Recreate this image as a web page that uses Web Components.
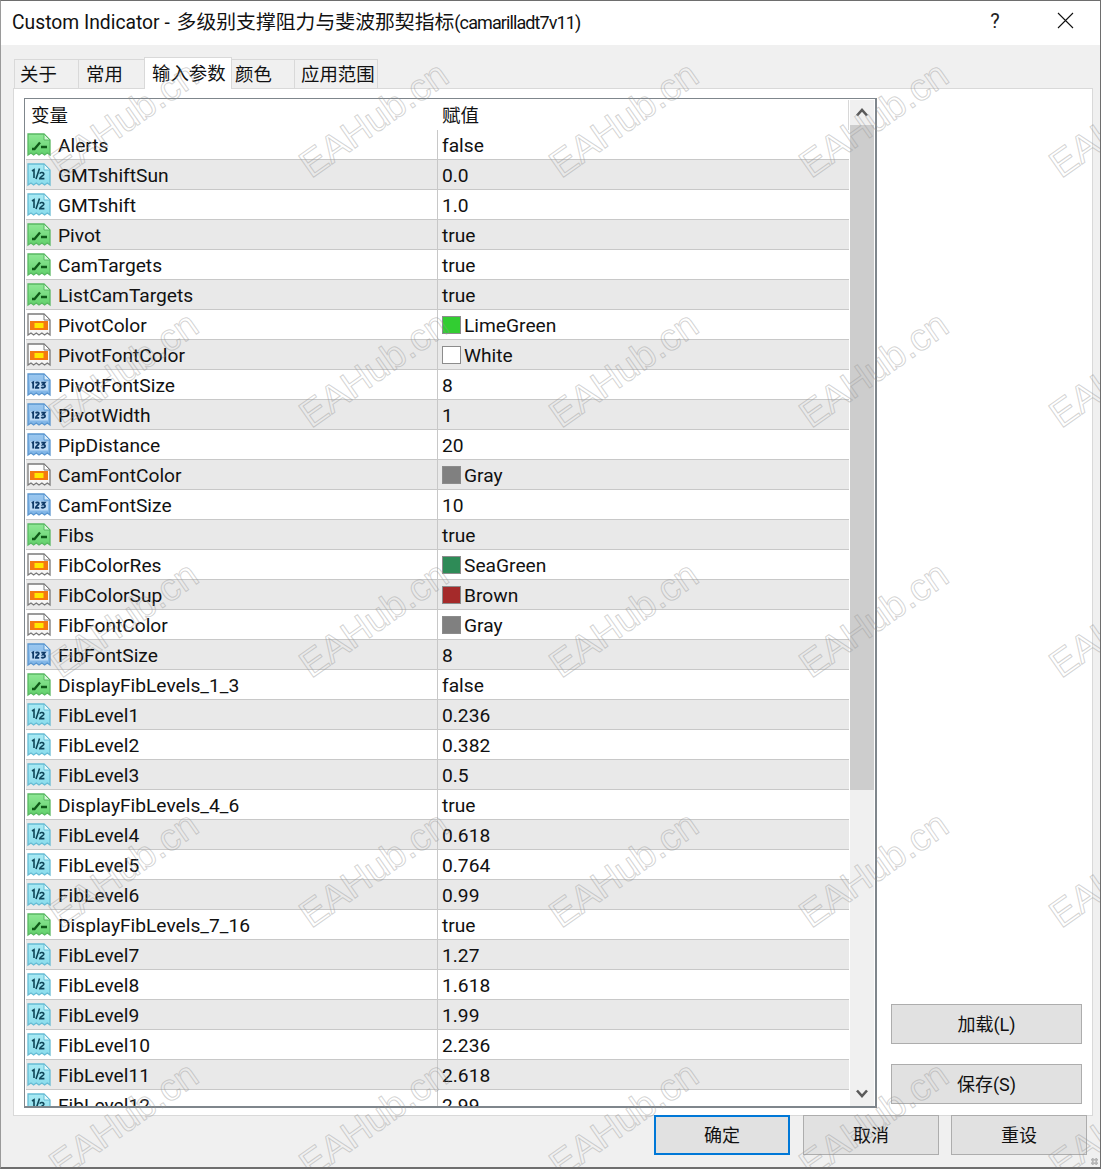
<!DOCTYPE html>
<html lang="zh"><head><meta charset="utf-8"><title>Custom Indicator</title>
<style>
html,body{margin:0;padding:0;background:#f0f0f0}
body{width:1101px;height:1169px;overflow:hidden;font-family:Roboto,"Noto Sans CJK SC",sans-serif}
</style></head><body>
<mt-dialog></mt-dialog>
<script>
const FONT='Roboto,"Noto Sans CJK SC",sans-serif';
const ICONS={
 b:{top:'#8fe896',bot:'#62d06c',edge:'#58b862',fold:'#d8f6da',inner:`<path d="M5 16H7.500L13 9.500M14 14H20" fill="none" stroke="#0f5a18" stroke-width="2.300"/>`},
 d:{top:'#a8eaf4',bot:'#8adcec',edge:'#66bcd4',fold:'#e6fafd',inner:`<path d="M5 8l2-1.300V15M12.500 5.500L9 16" fill="none" stroke="#0f4658" stroke-width="1.600"/><path d="M12.800 10.600c.6-1.600 4.300-1.400 4 .8-.2 1.200-4 2.700-4 4.200h4.600" fill="none" stroke="#0f4658" stroke-width="1.600"/>`},
 c:{top:'#ffffff',bot:'#f4f4f4',edge:'#7a7a7a',fold:'#fff',inner:`<rect x="3" y="8" width="18" height="9" fill="#f47a10"/><rect x="7.500" y="10" width="9" height="5" fill="#ffe800"/>`},
 i:{top:'#9cc8f0',bot:'#7fb4e6',edge:'#5a96cf',fold:'#dceefc',inner:`<rect x="3" y="8.500" width="18" height="9" fill="#cfe4f8" opacity=".75"/><path d="M4.700 10l1.500-.8v6.300M8.800 10.300c.6-1.400 3.200-1.200 3 .4-.1 1.100-3 2.400-3 4.100h3.400M14.300 9.600h3.400l-1.800 2.100c1.500-.1 2.300.6 2.200 1.600-.1 1.500-2.700 1.900-3.800.8" fill="none" stroke="#0f3a68" stroke-width="1.800"/>`}
};
let gid=0;
class ParamIcon extends HTMLElement{
 connectedCallback(){
  const k=ICONS[this.getAttribute('type')]||ICONS.b,id='g'+(++gid);
  this.attachShadow({mode:'open'}).innerHTML=`<style>:host{display:block;width:24px;height:24px;flex:none}svg{display:block}</style>
  <svg width="24" height="24" viewBox="0 0 24 24"><defs><linearGradient id="${id}" x1="0" y1="0" x2="0" y2="1"><stop offset="0" stop-color="${k.top}"/><stop offset="1" stop-color="${k.bot}"/></linearGradient></defs><path d="M1 1H17L23 7V22l-2.700-2-2.700 2-2.700-2-2.900 2-2.700-2-2.700 2-2.600-2L1 22z" fill="url(#${id})" stroke="${k.edge}" stroke-width="1.300"/><path d="M17 1V7H23z" fill="${k.fold}" stroke="${k.edge}" stroke-width="1"/>${k.inner}</svg>`;
 }
}
customElements.define('param-icon',ParamIcon);
class ParamRow extends HTMLElement{
 connectedCallback(){
  const n=this.getAttribute('name'),v=this.getAttribute('value'),t=this.getAttribute('type'),c=this.getAttribute('swatch');
  this.attachShadow({mode:'open'}).innerHTML=`<style>
  :host{display:grid;grid-template-columns:411px 1fr;height:30px;flex:none;box-sizing:border-box;border-bottom:1px solid #c8c8c8;background:#fff;font:19.2px/29px ${FONT};color:#111;white-space:nowrap}
  :host(:nth-child(even)){background:#e9e9e9}
  .n{display:flex;align-items:center;gap:7px;padding-left:1px;height:29px}
  .v{display:flex;align-items:center;gap:3px;padding-left:4px;border-left:1px solid #c8c8c8;height:29px}
  span{margin-top:2px}
  i{display:block;width:17px;height:16px;border:1px solid #8c8c8c;flex:none}
  </style><div class="n"><param-icon type="${t}"></param-icon><span>${n}</span></div><div class="v">${c?`<i style="background:${c}"></i>`:''}<span>${v}</span></div>`;
 }
}
customElements.define('param-row',ParamRow);
class ScrollBar extends HTMLElement{
 connectedCallback(){
  this.attachShadow({mode:'open'}).innerHTML=`<style>
  :host{display:flex;flex-direction:column;width:24px;flex:none;background:#f0f0f0}
  .a{height:25px;flex:none;display:flex;align-items:center;justify-content:center}
  .t{height:665px;flex:none;background:#cdcdcd}
  .s{flex:1}
  svg{display:block}
  </style><div class="a"><svg width="12" height="9" viewBox="0 0 12 9"><path d="M1 7.500L6 2l5 5.500" fill="none" stroke="#5a5a5a" stroke-width="2.600"/></svg></div><div class="t"></div><div class="s"></div>
  <div class="a"><svg width="12" height="9" viewBox="0 0 12 9"><path d="M1 1.500L6 7l5-5.500" fill="none" stroke="#5a5a5a" stroke-width="2.600"/></svg></div>`;
 }
}
customElements.define('scroll-bar',ScrollBar);
const ROWS=[['Alerts','false','b'],['GMTshiftSun','0.0','d'],['GMTshift','1.0','d'],['Pivot','true','b'],['CamTargets','true','b'],['ListCamTargets','true','b'],['PivotColor','LimeGreen','c','#32cd32'],['PivotFontColor','White','c','#ffffff'],['PivotFontSize','8','i'],['PivotWidth','1','i'],['PipDistance','20','i'],['CamFontColor','Gray','c','#808080'],['CamFontSize','10','i'],['Fibs','true','b'],['FibColorRes','SeaGreen','c','#2e8b57'],['FibColorSup','Brown','c','#a52a2a'],['FibFontColor','Gray','c','#808080'],['FibFontSize','8','i'],['DisplayFibLevels_1_3','false','b'],['FibLevel1','0.236','d'],['FibLevel2','0.382','d'],['FibLevel3','0.5','d'],['DisplayFibLevels_4_6','true','b'],['FibLevel4','0.618','d'],['FibLevel5','0.764','d'],['FibLevel6','0.99','d'],['DisplayFibLevels_7_16','true','b'],['FibLevel7','1.27','d'],['FibLevel8','1.618','d'],['FibLevel9','1.99','d'],['FibLevel10','2.236','d'],['FibLevel11','2.618','d'],['FibLevel12','2.99','d']];
class ParamList extends HTMLElement{
 connectedCallback(){
  const rows=ROWS.map(r=>`<param-row name="${r[0]}" value="${r[1]}" type="${r[2]}"${r[3]?` swatch="${r[3]}"`:''}></param-row>`).join('');
  this.attachShadow({mode:'open'}).innerHTML=`<style>
  :host{display:flex;box-sizing:border-box;width:853px;height:1010px;border:1px solid #7f868c;border-right-width:2px;border-bottom-width:2px;background:#fff;padding:1px 1px 0 1px}
  .c{width:823px;flex:none;overflow:hidden;display:flex;flex-direction:column;margin-right:1px}
  .h{display:grid;grid-template-columns:411px 1fr;height:30px;flex:none;font:18.500px/29px "Noto Sans CJK SC",sans-serif;color:#111;border-right:1px solid #d8d8d8;box-sizing:border-box}
  .h span:first-child{padding-left:5px}.h span:last-child{padding-left:5px}
  .r{display:flex;flex-direction:column}
  </style><div class="c"><div class="h"><span>变量</span><span>赋值</span></div><div class="r">${rows}</div></div><scroll-bar></scroll-bar>`;
 }
}
customElements.define('param-list',ParamList);
class UiButton extends HTMLElement{
 connectedCallback(){
  this.attachShadow({mode:'open'}).innerHTML=`<style>
  :host{display:flex;align-items:center;justify-content:center;box-sizing:border-box;height:40px;padding-top:2px;background:#e1e1e1;border:1px solid #adadad;font:18px/1 ${FONT};color:#111}
  :host([primary]){border:2px solid #0078d7}
  </style><slot></slot>`;
 }
}
customElements.define('ui-button',UiButton);
class TabStrip extends HTMLElement{
 connectedCallback(){
  const tabs=[['关于',65,5],['常用',67,7],['输入参数',88,7,1],['颜色',64,3],['应用范围',84,6]];
  this.attachShadow({mode:'open'}).innerHTML=`<style>
  :host{display:flex;align-items:flex-end;height:31px;padding-left:14px;margin-top:12px;position:relative;z-index:1;font:18.400px/1 "Noto Sans CJK SC",sans-serif;color:#111}
  div{box-sizing:border-box;height:29px;border:1px solid #d9d9d9;border-bottom:none;background:#f0f0f0;padding-top:4px;margin-left:-1px;white-space:nowrap}
  div.a{background:#fff;padding-top:5px;margin-bottom:-1px;height:32px;position:relative;z-index:1}
  </style>${tabs.map(t=>`<div ${t[3]?'class="a"':''} style="width:${t[1]}px;padding-left:${t[2]}px">${t[0]}</div>`).join('')}`;
 }
}
customElements.define('tab-strip',TabStrip);
class WaterMark extends HTMLElement{
 connectedCallback(){
  let cells='';
  for(let r=0;r<5;r++)for(let c=0;c<5;c++)cells+=`<span style="left:${c*250+60}px;top:${r*250+146}px">EAHub.cn</span>`;
  this.attachShadow({mode:'open'}).innerHTML=`<style>
  :host{position:absolute;inset:0;overflow:hidden;pointer-events:none;z-index:5}
  span{position:absolute;transform-origin:0 32px;transform:rotate(-35deg);font:38px/1 "Liberation Sans",sans-serif;color:transparent;-webkit-text-stroke:1px rgba(150,150,150,.42);white-space:nowrap}
  </style>${cells}`;
 }
}
customElements.define('water-mark',WaterMark);
class MtDialog extends HTMLElement{
 connectedCallback(){
  this.attachShadow({mode:'open'}).innerHTML=`<style>
  :host{display:block;position:relative;box-sizing:border-box;width:1101px;height:1169px;background:#f0f0f0;border:1px solid #6e6e6e;border-bottom-width:2px;border-left-color:#9a9a9a;font-family:${FONT};color:#111;overflow:hidden}
  .tb{display:flex;align-items:center;height:44px;box-sizing:border-box;padding:0 0 5px 11px;background:#fff;font-size:19.300px}
  .tb .t{flex:1;white-space:nowrap}
  .tb .z{font-size:19.850px;margin-left:2px}
  .tb .e{font-size:18px;letter-spacing:-.9px}
  .tb .q{width:20px;margin-right:52px;text-align:center;font-size:20px;color:#222}
  .tb svg{margin-right:26px;display:block}
  .panel{display:flex;gap:14px;box-sizing:border-box;width:1080px;height:1028px;margin-left:12px;background:#fff;border:1px solid #d9d9d9;padding:9px 10px 11px 10px}
  .side{display:flex;flex-direction:column;justify-content:flex-end;gap:20px;width:191px;flex:none}
  .foot{display:flex;justify-content:flex-end;gap:12px;padding-right:13px;margin-top:-1px;position:relative}
  .foot ui-button{width:136px}
  .foot ui-button[primary]{margin-right:1px}
  .grip{position:absolute;right:2px;bottom:2px;width:7px;height:7px;background:radial-gradient(#b5b5b5 60%,transparent 60%) 0 0/3.500px 3.500px}
  </style>
  <div class="tb"><span class="t">Custom Indicator - <span class="z">多级别支撑阻力与斐波那契指标</span><span class="e">(camarilladt7v11)</span></span><span class="q">?</span><svg width="17" height="17" viewBox="0 0 17 17"><path d="M1 1l15 15M16 1L1 16" stroke="#111" stroke-width="1.100" fill="none"/></svg></div>
  <tab-strip></tab-strip>
  <div class="panel"><param-list></param-list><div class="side"><ui-button>加载(L)</ui-button><ui-button>保存(S)</ui-button></div></div>
  <div class="foot"><ui-button primary>确定</ui-button><ui-button>取消</ui-button><ui-button>重设</ui-button></div>
  <div class="grip"></div>
  <water-mark></water-mark>`;
 }
}
customElements.define('mt-dialog',MtDialog);
</script>
</body></html>
